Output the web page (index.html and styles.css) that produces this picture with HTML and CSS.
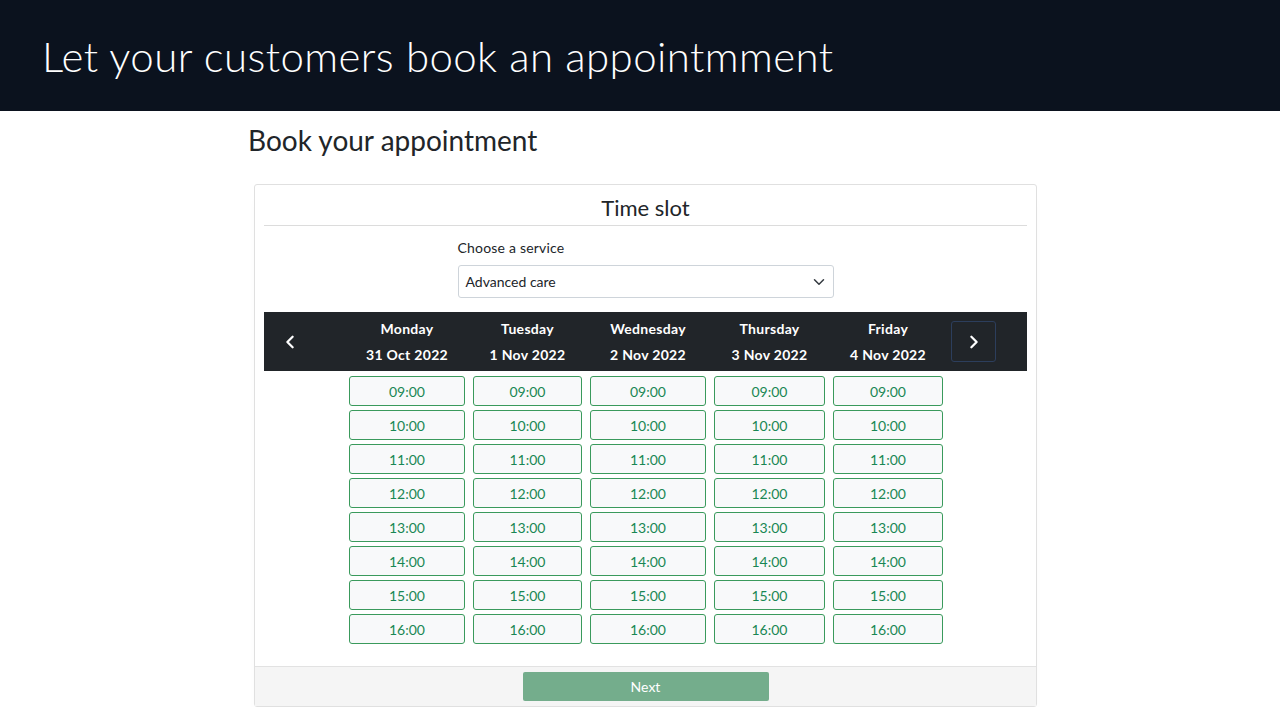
FILE: index.html
```html
<!DOCTYPE html>
<html>
<head>
<meta charset="utf-8">
<link rel="stylesheet" href="styles.css">
</head>
<body>
<header class="banner"><h1 class="banner-title">Let your customers book an appointmment</h1></header>
<main class="page">
  <h2 class="page-title">Book your appointment</h2>
  <section class="card">
    <div class="card-body">
      <h3 class="card-title">Time slot</h3>
      <div class="service">
        <label class="service-label">Choose a service</label>
        <div class="select"><span>Advanced care</span>
          <svg class="caret" viewBox="0 0 16 16" width="12" height="12"><path d="M2 5l6 6 6-6" fill="none" stroke="#343a40" stroke-width="2" stroke-linecap="round" stroke-linejoin="round"/></svg>
        </div>
      </div>
      <div class="calendar">
        <div class="cal-head">
          <div class="nav-cell"><button class="nav-btn prev"><svg viewBox="0 0 16 16" width="14" height="14"><path d="M11 2L5 8l6 6" fill="none" stroke="#fff" stroke-width="2.6" stroke-linecap="round" stroke-linejoin="round"/></svg></button></div>
          <div class="day"><div>Monday</div><div>31 Oct 2022</div></div>
          <div class="day"><div>Tuesday</div><div>1 Nov 2022</div></div>
          <div class="day"><div>Wednesday</div><div>2 Nov 2022</div></div>
          <div class="day"><div>Thursday</div><div>3 Nov 2022</div></div>
          <div class="day"><div>Friday</div><div>4 Nov 2022</div></div>
          <div class="nav-cell"><button class="nav-btn next"><svg viewBox="0 0 16 16" width="14" height="14"><path d="M5 2l6 6-6 6" fill="none" stroke="#fff" stroke-width="2.6" stroke-linecap="round" stroke-linejoin="round"/></svg></button></div>
        </div>
        <div class="cal-body" id="slots"></div>
      </div>
    </div>
    <div class="card-footer"><button class="next-btn">Next</button></div>
  </section>
</main>
<script>
var times=["09:00","10:00","11:00","12:00","13:00","14:00","15:00","16:00"];
var html="";
times.forEach(function(t){
  html+='<div class="spacer"></div>';
  for(var i=0;i<5;i++){html+='<div class="slot-cell"><button class="slot">'+t+'</button></div>';}
  html+='<div class="spacer"></div>';
});
document.getElementById("slots").innerHTML=html;
</script>
</body>
</html>
```
FILE: styles.css
```css
html,body{margin:0;padding:0;background:#fff;}
body{font-family:"Source Sans Pro","Lato","Noto Sans",sans-serif;color:#212529;}
.banner{background:#0b121e;height:111px;display:flex;align-items:center;padding-left:42px;}
.banner-title{margin:0;color:#fff;font-family:"Lato",sans-serif;font-weight:300;font-size:42px;letter-spacing:0.4px;}
.page{width:789px;margin:0 0 0 248px;}
.page-title{margin:12px 0 0 0;font-weight:400;font-size:28px;line-height:34px;color:#212529;}
.card{margin:27px 0 0 6px;width:781px;border:1px solid #e0e0e0;border-radius:3px;box-shadow:0 10px 12px -6px rgba(0,0,0,0.06);}
.card-body{padding:10px 9px 18px;}
.card-title{margin:0;text-align:center;font-weight:400;font-size:22px;line-height:26px;padding-bottom:4px;border-bottom:1px solid #dcdcdc;}
.service{width:376px;margin:12px auto 0;}
.service-label{display:block;font-size:14px;line-height:20px;color:#212529;letter-spacing:0.2px;}
.select{margin-top:7px;height:31px;border:1px solid #ced4da;border-radius:3px;display:flex;align-items:center;justify-content:space-between;padding:0 8px 0 7px;font-size:14px;}
.calendar{margin-top:14px;}
.cal-head{background:#212529;height:59px;display:grid;grid-template-columns:81px 124px 117px 124px 119px 118px 81px;align-items:center;color:#fff;}
.cal-body{display:grid;grid-template-columns:81px 124px 117px 124px 119px 118px 81px;padding-top:5px;}
.day{text-align:center;font-weight:700;font-size:14px;line-height:26px;letter-spacing:0.3px;}
.nav-cell{display:flex;justify-content:center;}
.nav-btn{width:45px;height:41px;background:transparent;border:1px solid transparent;border-radius:3px;display:flex;align-items:center;justify-content:center;padding:0;}
.nav-btn.prev{margin-left:-30px;}
.nav-btn.next{border-color:#2c3e5c;margin-left:-28px;}
.slot-cell{padding:0 4px 4px;}
.slot{width:100%;height:30px;background:#f8f9fa;border:1px solid #3a9a5c;border-radius:3px;color:#198754;font-family:inherit;font-size:14px;padding:0;}
.card-footer{background:#f5f5f5;border-top:1px solid #e2e2e2;height:39px;display:flex;justify-content:center;align-items:center;}
.next-btn{width:246px;height:29px;background:#74ad8c;border:0;border-radius:2px;color:#fff;font-family:inherit;font-size:14px;}
```
